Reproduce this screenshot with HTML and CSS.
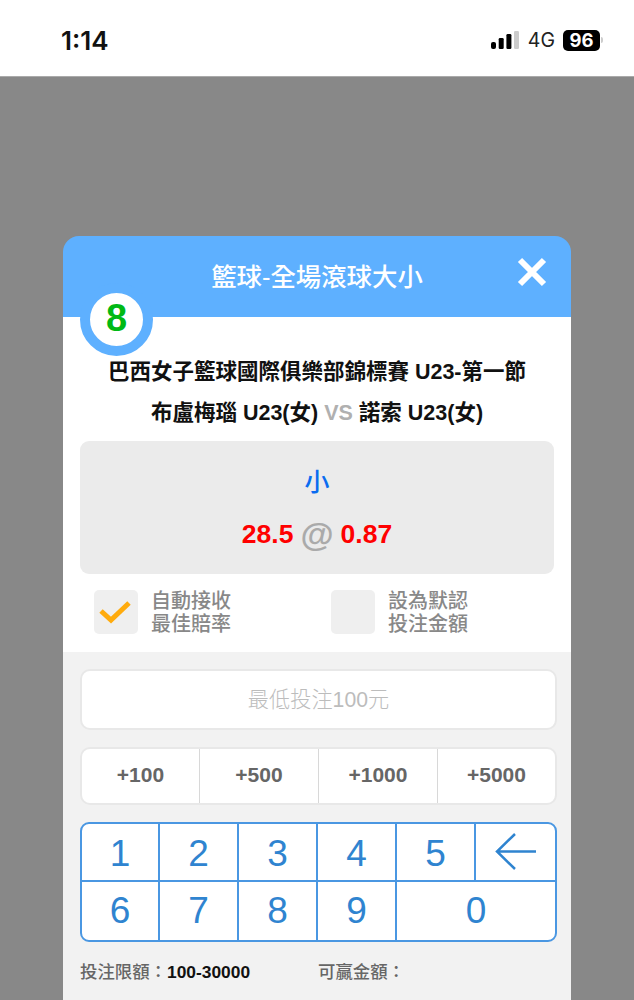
FILE: index.html
```html
<!DOCTYPE html>
<html lang="zh-Hant">
<head>
<meta charset="utf-8">
<title>投注</title>
<link rel="stylesheet" href="styles.css">
</head>
<body>
<header class="status">
  <span class="time">1:14</span>
  <div class="status-right">
    <svg class="signal" width="28" height="18" viewBox="0 0 28 18"><rect x="0" y="11" width="5" height="7" rx="2" fill="#000"/><rect x="7.700" y="7" width="5" height="11" rx="1.300" fill="#000"/><rect x="15.400" y="3" width="5" height="15" rx="1.300" fill="#000"/><rect x="23" y="0" width="5" height="18" rx="1.300" fill="#ccc"/></svg>
    <span class="net">4G</span>
    <span class="battery">96</span>
    <span class="nub"></span>
  </div>
</header>
<main class="overlay">
  <section class="modal">
    <div class="modal-head">
      <h1 class="modal-title">籃球-全場滾球大小</h1>
      <svg class="close" width="30" height="30" viewBox="0 0 30 30"><path d="M3 3 L27 27 M27 3 L3 27" stroke="#fff" stroke-width="6" fill="none"/></svg>
      <div class="badge"><span class="badge-num">8</span></div>
    </div>
    <div class="modal-top">
      <p class="league">巴西女子籃球國際俱樂部錦標賽 U23-第一節</p>
      <p class="teams">布盧梅瑙 U23(女) <span class="vs">VS</span> 諾索 U23(女)</p>
      <div class="pick">
        <div class="pick-name">小</div>
        <div class="pick-odds"><span>28.5</span><span class="at">@</span><span>0.87</span></div>
      </div>
      <div class="options">
        <div class="option">
          <span class="check"><svg class="tick" width="34" height="26" viewBox="0 0 34 26"><path d="M3 13 L13 22 L31 5" stroke="#ffab0d" stroke-width="5" fill="none"/></svg></span>
          <span class="option-text">自動接收<br>最佳賠率</span>
        </div>
        <div class="option">
          <span class="check"></span>
          <span class="option-text">設為默認<br>投注金額</span>
        </div>
      </div>
    </div>
    <div class="modal-bottom">
      <div class="amount">最低投注100元</div>
      <div class="quick">
        <div class="quick-btn">+100</div>
        <div class="quick-btn">+500</div>
        <div class="quick-btn">+1000</div>
        <div class="quick-btn">+5000</div>
      </div>
      <div class="keypad">
        <div class="key key-up">1</div>
        <div class="key key-up">2</div>
        <div class="key key-up">3</div>
        <div class="key key-up">4</div>
        <div class="key key-up">5</div>
        <div class="key key-end"><svg width="42" height="38" viewBox="0 0 42 38"><path d="M41 18.500 H2 M20 1 L2 18.500 L20 36" stroke="#2f84d0" stroke-width="2.500" fill="none"/></svg></div>
        <div class="key key-low">6</div>
        <div class="key key-low">7</div>
        <div class="key key-low">8</div>
        <div class="key key-low">9</div>
        <div class="key key-low key-wide key-end">0</div>
      </div>
      <div class="limits">
        <div class="limit">投注限額：<b>100-30000</b></div>
        <div class="limit">可贏金額：</div>
      </div>
    </div>
  </section>
</main>
</body>
</html>
```
FILE: styles.css
```css
* { box-sizing: border-box; }
html, body { margin: 0; height: 1000px; overflow: hidden; }
body {
  font-family: "Liberation Sans", "Noto Sans CJK TC", sans-serif;
  background: #888;
  display: flex;
  flex-direction: column;
}
.status {
  height: 77px;
  flex: none;
  background: #fff;
  border-bottom: 1px solid #aaa;
  display: flex;
  align-items: center;
  justify-content: space-between;
  padding: 4px 31px 0 61px;
}
.time { font-family: Inter, "Liberation Sans", sans-serif; font-size: 26px; font-weight: 600; color: #111; }
.status-right { display: flex; align-items: center; }
.signal { margin-right: 9px; }
.net { font-family: Inter, "Liberation Sans", sans-serif; font-size: 19.500px; color: #222; margin-right: 8px; }
.battery {
  width: 37px; height: 21px; border-radius: 5px; background: #000; color: #fff;
  font-family: Inter, "Liberation Sans", sans-serif;
  font-size: 18.500px; font-weight: 700; line-height: 21px; text-align: center;
}
.nub { width: 2px; height: 6px; background: #ccc; border-radius: 0 2px 2px 0; margin-left: 1px; }
.overlay { flex: 1; padding: 159px 63px 0; overflow: hidden; }
.modal { height: 900px; }
.modal-head {
  position: relative;
  height: 81px;
  background: #5eb0ff;
  border-radius: 16px 16px 0 0;
  display: flex;
  align-items: center;
  justify-content: center;
}
.modal-title { margin: 0; font-size: 25.400px; font-weight: 500; color: #fff; padding-bottom: 3px; }
.close { position: absolute; right: 24px; top: 21px; }
.badge {
  position: absolute; left: 17px; top: 47px;
  width: 73px; height: 73px; border-radius: 50%;
  background: #fff; border: 10px solid #5eb0ff;
  display: flex; align-items: center; justify-content: center;
}
.badge-num { font-size: 38px; font-weight: 700; color: #00b915; line-height: 1; padding-bottom: 3px; }
.modal-top { background: #fff; padding: 41px 17px 0; height: 335px; }
.league, .teams { margin: 0; text-align: center; font-size: 21.500px; font-weight: 700; color: #111; line-height: 28px; white-space: nowrap; }
.league { height: 28px; }
.teams { margin-top: 13px; }
.vs { color: #b0b0b0; }
.pick {
  height: 133px; margin-top: 14px; background: #ebebeb; border-radius: 9px;
  display: flex; flex-direction: column; align-items: center;
}
.pick-name { margin-top: 25px; height: 32px; font-size: 25px; line-height: 32px; color: #0a6cf0; font-weight: 500; }
.pick-odds { margin-top: 16px; display: flex; align-items: center; gap: 7px; height: 40px; font-size: 26.500px; font-weight: 700; color: #f00; }
.at { font-size: 34px; font-weight: 700; color: #aaa; }
.options { display: flex; margin-top: 16px; padding-left: 14px; height: 44px; }
.option { flex: none; width: 237px; height: 44px; display: flex; align-items: center; gap: 13px; }
.check {
  flex: none; width: 44px; height: 44px; border-radius: 5px; background: #efefef;
  display: flex; align-items: center; justify-content: center;
}
.tick { margin: 0 2px 3px 0; }
.option-text { font-size: 20px; line-height: 23px; color: #888; font-weight: 500; padding-top: 2px; }
.modal-bottom { background: #f2f2f2; height: 484px; padding: 17px 14px 0 17px; }
.amount {
  height: 61px; background: #fff; border: 2px solid #e8e8e8; border-radius: 10px;
  display: flex; align-items: center; justify-content: center;
  font-size: 21.200px; font-weight: 300; color: #bcbcbc; padding-bottom: 4px;
}
.quick {
  height: 58px; margin-top: 17px; background: #fff; border: 2px solid #e8e8e8; border-radius: 10px;
  display: grid; grid-template-columns: 117px 119px 119px 1fr;
}
.quick-btn {
  display: flex; align-items: center; justify-content: center;
  font-size: 21px; font-weight: 700; color: #666; padding-bottom: 2px;
  border-left: 1px solid #d8d8d8;
}
.quick-btn:first-child { border-left: 0; }
.keypad {
  height: 120px; margin-top: 17px; background: #fff; border: 2px solid #4a97e2; border-radius: 9px;
  display: grid; grid-template-columns: 78px repeat(4, 79px) 1fr; grid-template-rows: 58px 1fr;
  overflow: hidden;
}
.key {
  display: flex; align-items: center; justify-content: center;
  font-size: 37px; color: #2f84d0;
  border-right: 2px solid #4a97e2;
  border-bottom: 2px solid #4a97e2;
}
.key-up { padding-top: 3px; }
.key-low { border-bottom: 0; }
.key-end { border-right: 0; }
.key-wide { grid-column: span 2; }
.limits { display: flex; margin-top: 18px; font-size: 17.400px; font-weight: 500; color: #666; }
.limit { flex: none; width: 238px; line-height: 24px; }
.limit b { color: #111; }
```
